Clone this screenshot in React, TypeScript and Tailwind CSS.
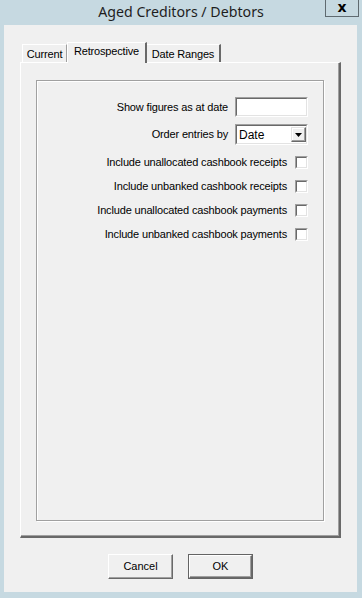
import React from "react";

const ui = { fontFamily: '"Liberation Sans", Arial, sans-serif' };

function Checkbox() {
  return (
    <div className="w-[13px] h-[13px] shrink-0 bg-white border border-t-[#a0a0a0] border-l-[#a0a0a0] border-r-white border-b-white">
      <div className="w-full h-full border border-t-[#696969] border-l-[#696969] border-r-[#e3e3e3] border-b-[#e3e3e3]" />
    </div>
  );
}

function CbRow({ label }: { label: string }) {
  return (
    <div className="flex items-center justify-end gap-[8px] h-[13px] mt-[11px]">
      <span className="text-[11px] leading-[13px] tracking-[-0.16px] text-black whitespace-nowrap">{label}</span>
      <Checkbox />
    </div>
  );
}

export default function App() {
  return (
    <div className="w-[362px] h-[598px] bg-[#c6d9e1] flex flex-col" style={ui}>
      {/* Title bar */}
      <div className="relative h-[25px] flex items-center justify-center shrink-0">
        <span className="text-[14.2px] text-[#1e1e1e] mt-[-1px]" style={{ fontFamily: '"Noto Sans", "Open Sans", sans-serif' }}>
          Aged Creditors / Debtors
        </span>
        <div className="absolute left-[325px] top-0 w-[34px] h-[17px] border border-t-0 border-[#5f6a70] flex items-center justify-center">
          <span className="text-[14px] font-bold text-black leading-[14px] mt-[-2px]" style={{ fontFamily: '"DejaVu Sans", sans-serif' }}>x</span>
        </div>
      </div>

      {/* Client area */}
      <div className="ml-[4px] w-[353px] h-[567px] bg-[#f0f0f0] flex flex-col">
        {/* Tabs */}
        <div className="ml-[18px] mt-[17px] h-[20px] flex items-end">
          <div className="w-[45px] h-[18px] border-l border-t border-white border-r border-r-[#a0a0a0] bg-[#f0f0f0] flex items-center justify-center">
            <span className="text-[11px] leading-none tracking-[-0.16px] text-black mt-[1px]">Current</span>
          </div>
          <div className="w-[80px] h-[21px] mb-[-1px] relative z-10 border-l border-t border-white border-r-2 border-r-[#696969] bg-[#f0f0f0] flex items-start justify-center">
            <span className="text-[11px] leading-none tracking-[-0.16px] text-black mt-[3px]">Retrospective</span>
          </div>
          <div className="w-[74px] h-[18px] border-t border-white border-r-2 border-r-[#696969] bg-[#f0f0f0] flex items-center justify-center">
            <span className="text-[11px] leading-none tracking-[-0.16px] text-black mt-[1px]">Date Ranges</span>
          </div>
        </div>

        {/* Tab panel */}
        <div className="ml-[16px] w-[321px] h-[476px] border-l border-t border-white border-r-2 border-b-2 border-r-[#696969] border-b-[#696969] shadow-[inset_-1px_-1px_0_#a0a0a0] p-[17px] pl-[15px] pt-[17px]">
          {/* Group box */}
          <div className="w-[288px] h-[441px] border border-[#a0a0a0] shadow-[1px_1px_0_#ffffff,inset_1px_1px_0_#ffffff] flex flex-col pr-[15px] pt-[16px]">
            <div className="flex items-center justify-end gap-[7px] h-[20px]">
              <span className="text-[11px] leading-none tracking-[-0.16px] text-black whitespace-nowrap">Show figures as at date</span>
              <div className="w-[73px] h-[20px] bg-white border border-t-[#a0a0a0] border-l-[#a0a0a0] border-r-white border-b-white">
                <div className="w-full h-full border border-t-[#696969] border-l-[#696969] border-r-[#e3e3e3] border-b-[#e3e3e3]" />
              </div>
            </div>
            <div className="flex items-center justify-end gap-[7px] h-[21px] mt-[7px]">
              <span className="text-[11px] leading-none tracking-[-0.16px] text-black whitespace-nowrap">Order entries by</span>
              <div className="w-[73px] h-[21px] bg-white border border-t-[#a0a0a0] border-l-[#a0a0a0] border-r-white border-b-white">
                <div className="w-full h-full border border-t-[#696969] border-l-[#696969] border-r-[#e3e3e3] border-b-[#e3e3e3] flex items-center">
                  <span className="text-[12px] leading-none text-black ml-[2px] flex-1 mt-[1px]">Date</span>
                  <div className="w-[15px] h-[15px] bg-[#f0f0f0] border border-t-[#e3e3e3] border-l-[#e3e3e3] border-r-[#696969] border-b-[#696969] shadow-[inset_-1px_-1px_0_#a0a0a0,inset_1px_1px_0_#ffffff] flex items-center justify-center">
                    <svg width="7" height="4" viewBox="0 0 7 4"><path d="M0 0h7L3.5 4z" fill="#000" /></svg>
                  </div>
                </div>
              </div>
            </div>
            <CbRow label="Include unallocated cashbook receipts" />
            <CbRow label="Include unbanked cashbook receipts" />
            <CbRow label="Include unallocated cashbook payments" />
            <CbRow label="Include unbanked cashbook payments" />
          </div>
        </div>

        {/* Buttons */}
        <div className="flex justify-center gap-[15px] mt-[16px]">
          <button className="w-[65px] h-[25px] bg-[#f0f0f0] border border-t-white border-l-white border-r-[#696969] border-b-[#696969] shadow-[inset_-1px_-1px_0_#a0a0a0] flex items-center justify-center">
            <span className="text-[11px] leading-none text-black">Cancel</span>
          </button>
          <button className="w-[65px] h-[25px] bg-[#f0f0f0] border border-[#646464] flex">
            <div className="flex-1 border border-t-white border-l-white border-r-[#696969] border-b-[#696969] shadow-[inset_-1px_-1px_0_#a0a0a0] flex items-center justify-center">
              <span className="text-[11px] leading-none text-black">OK</span>
            </div>
          </button>
        </div>
      </div>
    </div>
  );
}
